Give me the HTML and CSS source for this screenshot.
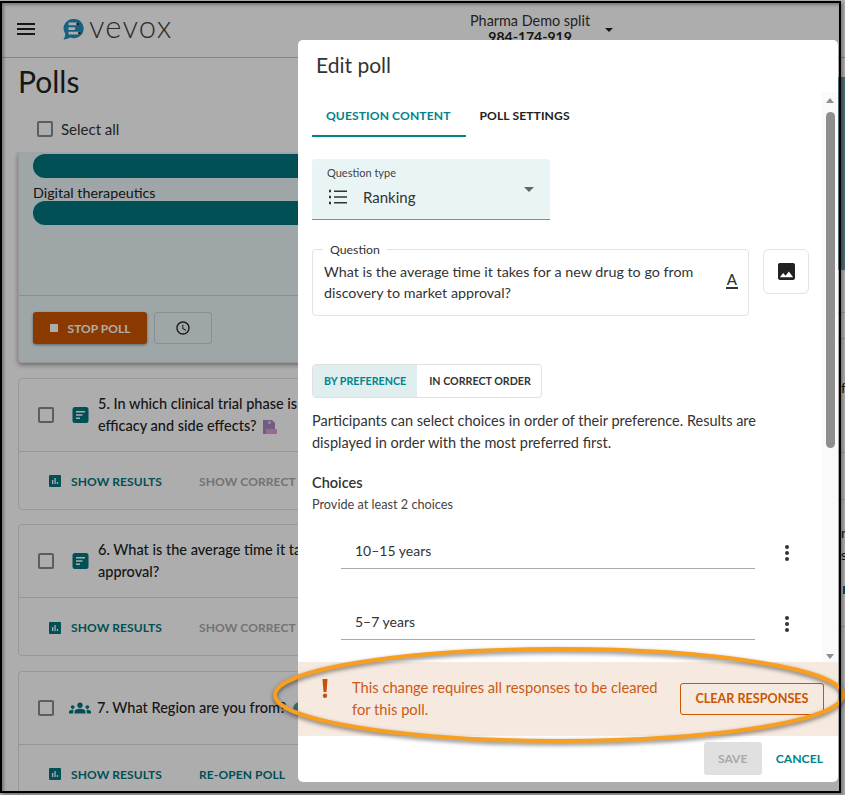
FILE: index.html
```html
<!DOCTYPE html>
<html lang="en">
<head>
<meta charset="utf-8">
<title>Polls</title>
<link rel="stylesheet" href="styles.css">
</head>
<body>
<div class="app">
  <header class="topbar">
    <svg class="burger" viewBox="0 0 18 12"><path d="M0 0h18v2H0zM0 5h18v2H0zM0 10h18v2H0z"/></svg>
    <svg class="logo-mark" viewBox="0 0 24 24"><path fill="#1e8fc0" d="M12 1a10.500 10.500 0 1 1-4 20.200Q4 23.500.5 23.500 2.500 21 2.400 17.200A10.500 10.500 0 0 1 12 1z"/><path fill="#fff" d="M6 5h9a1.500 1.500 0 0 1 0 3H6zM6 10h6a1.500 1.500 0 0 1 0 3H6zM6 15h12a1.500 1.500 0 0 1 0 3H6z"/><circle cx="16" cy="6.500" r="1.500" fill="#333"/><circle cx="18" cy="16.500" r="1.500" fill="#333"/></svg>
    <span class="logo-word">vevox</span>
    <div class="session">
      <span class="session-name">Pharma Demo split</span>
      <strong class="session-code">984-174-919</strong>
    </div>
    <span class="session-caret"></span>
  </header>
  <div class="shell">
    <main class="content">
      <h1 class="page-title">Polls</h1>
      <label class="select-all"><span class="checkbox"></span>Select all</label>
      <section class="card card-active">
        <div class="results">
          <div class="bar"></div>
          <div class="bar-label">Digital therapeutics</div>
          <div class="bar"></div>
        </div>
        <div class="foot-active">
          <button class="stop-btn"><span class="stop-square"></span>STOP POLL</button>
          <button class="timer-btn"><svg viewBox="0 0 24 24"><path d="M11.990 2C6.470 2 2 6.480 2 12s4.470 10 9.990 10C17.520 22 22 17.520 22 12S17.520 2 11.990 2zM12 20c-4.420 0-8-3.580-8-8s3.580-8 8-8 8 3.580 8 8-3.580 8-8 8zm.5-13H11v6l5.250 3.150.75-1.230-4.500-2.670z"/></svg></button>
        </div>
      </section>
      <section class="card">
        <div class="card-main">
          <span class="checkbox"></span>
          <svg class="type-icon" viewBox="0 0 16 16"><rect width="16" height="16" rx="2.500"/><path fill="#fff" d="M3.500 4h9v1.600h-9zM3.500 7.200h6.500v1.600H3.500zM3.500 10.400h4v1.600h-4z"/></svg>
          <p class="question">5. In which clinical trial phase is a new drug tested for<br>efficacy and side effects? <svg class="emoji" viewBox="0 0 14 14"><path fill="#a88ac0" d="M0 0h9l3 3v11H0z"/><path fill="#d9b8e0" d="M5 1h3v3H5z"/><path fill="#e59ad8" d="M3 9h11v5H3z"/></svg></p>
        </div>
        <div class="card-foot">
          <a class="action"><svg class="chart" viewBox="0 0 12 12"><rect width="12" height="12" rx="1"/><path fill="#fff" d="M3 5h1.300v4H3zM5.400 3h1.300v6H5.400zM7.800 7h1.300v2H7.800z"/></svg>SHOW RESULTS</a>
          <a class="action muted">SHOW CORRECT ANSWERS</a>
        </div>
      </section>
      <section class="card">
        <div class="card-main">
          <span class="checkbox"></span>
          <svg class="type-icon" viewBox="0 0 16 16"><rect width="16" height="16" rx="2.500"/><path fill="#fff" d="M3.500 4h9v1.600h-9zM3.500 7.200h6.500v1.600H3.500zM3.500 10.400h4v1.600h-4z"/></svg>
          <p class="question">6. What is the average time it takes for a new drug to go from discovery to market<br>approval?</p>
        </div>
        <div class="card-foot">
          <a class="action"><svg class="chart" viewBox="0 0 12 12"><rect width="12" height="12" rx="1"/><path fill="#fff" d="M3 5h1.300v4H3zM5.400 3h1.300v6H5.400zM7.800 7h1.300v2H7.800z"/></svg>SHOW RESULTS</a>
          <a class="action muted">SHOW CORRECT ANSWERS</a>
        </div>
      </section>
      <section class="card">
        <div class="card-main">
          <span class="checkbox"></span>
          <svg class="type-icon wide" viewBox="0 0 24 24"><path d="M12 12.750c1.630 0 3.070.39 4.240.9 1.080.48 1.760 1.560 1.760 2.730V18H6v-1.610c0-1.180.68-2.260 1.760-2.730 1.170-.52 2.610-.91 4.240-.91zM4 13c1.100 0 2-.9 2-2s-.9-2-2-2-2 .9-2 2 .9 2 2 2zm1.130 1.100C4.760 14.040 4.390 14 4 14c-.99 0-1.930.21-2.780.58C.48 14.900 0 15.620 0 16.430V18h4.500v-1.610c0-.83.23-1.610.63-2.290zM20 13c1.100 0 2-.9 2-2s-.9-2-2-2-2 .9-2 2 .9 2 2 2zm4 3.430c0-.81-.48-1.530-1.220-1.850C21.930 14.210 20.990 14 20 14c-.39 0-.76.04-1.130.1.400.68.630 1.460.630 2.290V18H24v-1.570zM12 6c1.660 0 3 1.340 3 3s-1.340 3-3 3-3-1.340-3-3 1.340-3 3-3z"/></svg>
          <p class="question">7. What Region are you from? <svg class="emoji globe" viewBox="0 0 14 14"><circle cx="7" cy="7" r="7" fill="#4a90c8"/><path fill="#5aa060" d="M3 2l4 1 1 3-3 3-3-2z"/></svg></p>
        </div>
        <div class="card-foot">
          <a class="action"><svg class="chart" viewBox="0 0 12 12"><rect width="12" height="12" rx="1"/><path fill="#fff" d="M3 5h1.300v4H3zM5.400 3h1.300v6H5.400zM7.800 7h1.300v2H7.800z"/></svg>SHOW RESULTS</a>
          <a class="action">RE-OPEN POLL</a>
        </div>
      </section>
    </main>
    <aside class="side">
      <div class="side-media"></div>
      <div class="side-row side-a"></div>
      <div class="side-row side-b"></div>
      <div class="side-row side-c">f</div>
      <div class="side-row side-d"></div>
      <div class="side-row side-e">n<br>s<span class="side-tag"></span></div>
    </aside>
  </div>
</div>
<div class="scrim"></div>
<div class="modal">
  <h2 class="modal-title">Edit poll</h2>
  <div class="modal-scroll">
    <div class="modal-body">
      <nav class="tabs">
        <span class="tab tab-on">QUESTION CONTENT</span>
        <span class="tab">POLL SETTINGS</span>
      </nav>
      <div class="select-field">
        <span class="field-label">Question type</span>
        <span class="select-value">
          <svg class="rank-icon" viewBox="0 0 18 16"><path d="M5 1.500h13v1.600H5zM5 7.200h13v1.600H5zM5 12.900h13v1.600H5z"/><path d="M0 .800h2v2.400H0zM0 6.800h2v2.400H0zM0 12.800h2v2.400H0z"/></svg>
          Ranking
        </span>
        <span class="select-caret"></span>
      </div>
      <div class="question-row">
        <fieldset class="question-field">
          <legend>Question</legend>
          <p class="question-text">What is the average time it takes for a new drug to go from discovery to market approval?</p>
          <span class="format-a">A</span>
        </fieldset>
        <button class="image-btn"><svg viewBox="0 0 18 18"><path d="M18 16V2c0-1.100-.9-2-2-2H2C.9 0 0 .9 0 2v14c0 1.100.9 2 2 2h14c1.100 0 2-.9 2-2zM5.500 10.500l2.500 3 3.500-4.500 4.500 6H2l3.500-4.500z"/></svg></button>
      </div>
      <div class="toggle">
        <span class="toggle-item toggle-on">BY PREFERENCE</span>
        <span class="toggle-item toggle-off">IN CORRECT ORDER</span>
      </div>
      <p class="help">Participants can select choices in order of their preference. Results are displayed in order with the most preferred first.</p>
      <h3 class="choices-title">Choices</h3>
      <p class="choices-sub">Provide at least 2 choices</p>
      <div class="choice"><span class="choice-input">10–15 years</span><span class="kebab"><i></i><i></i><i></i></span></div>
      <div class="choice"><span class="choice-input">5–7 years</span><span class="kebab"><i></i><i></i><i></i></span></div>
    </div>
    <div class="scrollbar">
      <span class="arrow-up"></span>
      <span class="thumb"></span>
      <span class="arrow-down"></span>
    </div>
  </div>
  <div class="warning">
    <svg class="warn-mark" viewBox="0 0 6 19"><path d="M.5 0h5L4.500 13h-3z"/><circle cx="3" cy="16.800" r="2.200"/></svg>
    <p class="warn-text">This change requires all responses to be cleared for this poll.</p>
    <button class="clear-btn">CLEAR RESPONSES</button>
  </div>
  <div class="modal-foot">
    <button class="save-btn">SAVE</button>
    <button class="cancel-btn">CANCEL</button>
  </div>
</div>
<svg class="annotation" viewBox="0 0 845 795"><ellipse cx="559" cy="695" rx="284" ry="46"/></svg>
<div class="frame"></div>
</body>
</html>
```
FILE: styles.css
```css
* { box-sizing: border-box; }
html, body { margin: 0; height: 100%; }
body {
  width: 845px;
  height: 795px;
  overflow: hidden;
  position: relative;
  background: #fff;
  color: #222;
  font-family: Lato, "Liberation Sans", sans-serif;
}
p, h1, h2, h3 { margin: 0; font-weight: 400; }
button { font-family: inherit; cursor: pointer; }

.app { height: 795px; overflow: hidden; }
.topbar {
  height: 58px;
  display: flex;
  align-items: center;
  padding: 0 0 0 17px;
  border-bottom: 1px solid #c4c4c4;
}
.burger { width: 18px; height: 12px; fill: #222; margin-right: 28px; }
.logo-mark { width: 22px; height: 22px; margin-right: 4px; }
.logo-word { font: 300 31px/1 Lato, sans-serif; color: #444; margin-top: -5px; width: 83px; letter-spacing: 1.200px; }
.session {
  display: flex; flex-direction: column; align-items: center;
  margin-left: 298px; font-size: 14.400px; line-height: 16px; margin-top: 1px;
}
.session-name { color: #333; }
.session-code { font-size: 14px; }
.session-caret {
  border: 4px solid transparent; border-top: 4px solid #222; border-bottom: 0;
  margin: 3px 0 0 15px;
}

.shell { display: flex; }
.content { width: 838px; flex: none; padding: 0 0 0 18px; overflow: hidden; height: 737px; }
.page-title { font-size: 30px; line-height: 36px; margin-top: 5px; color: #222; }
.select-all {
  display: flex; align-items: center; gap: 8px;
  margin: 22px 0 0 19px; height: 16px;
  font-size: 15px; color: #333;
}
.checkbox {
  width: 16px; height: 16px; flex: none;
  border: 2px solid #8a8a8a; border-radius: 2px; background: #fff;
}
.card {
  margin: 0 0 14.500px; width: 840px; height: 132px;
  border: 1px solid #e0e0e0; border-radius: 4px; background: #fff;
}
.card-active {
  height: 211px; margin-top: 15px; margin-bottom: 14.500px; background: #eaf5f6; border-top: 0; border-radius: 0 0 4px 4px;
  box-shadow: 0 2px 5px rgba(0,0,0,.4); display: flex; flex-direction: column;
  clip-path: inset(0 -10px -10px -10px);
}
.results { height: 143px; padding: 2px 14px 0; }
.bar { height: 24px; background: #00767f; border-radius: 12px; }
.bar-label { font-size: 14.300px; line-height: 17px; margin: 6px 0 0; color: #222; }
.foot-active { display: flex; height: 67px; border-top: 1px solid #ccd5d7; padding: 16px 14px 0; gap: 7px; }
.stop-btn {
  width: 114px; height: 32px; border: 0; border-radius: 3px; background: #cc5500; color: #fff;
  font-size: 12px; font-weight: 700; display: flex; align-items: center; justify-content: center; gap: 10px;
  box-shadow: 0 1px 3px rgba(0,0,0,.4); padding: 0;
}
.stop-square { width: 8px; height: 8px; background: #fff; }
.timer-btn {
  width: 58px; height: 32px; background: transparent; border: 1px solid #c9d3d5; border-radius: 3px;
  display: flex; align-items: center; justify-content: center; padding: 0;
}
.timer-btn svg { width: 16px; height: 16px; fill: #222; }

.card-main { display: flex; align-items: center; height: 72px; padding: 0 0 0 19px; }
.card-main .checkbox { margin-right: 18px; }
.type-icon { width: 17px; height: 16px; fill: #00767f; flex: none; margin-right: 9px; }
.type-icon.wide { width: 24px; height: 22px; margin: 0 5px 0 -4px; }
.question { font-size: 14.500px; line-height: 22px; font-weight: 500; color: #222; white-space: nowrap; }
.emoji { width: 14px; height: 14px; vertical-align: -3px; margin-left: 3px; }
.card-foot { display: flex; align-items: center; height: 60px; border-top: 1px solid #dcdcdc; padding-left: 30px; }
.action {
  display: flex; align-items: center; gap: 10px;
  font-size: 12px; font-weight: 700; color: #00767f; letter-spacing: .1px; margin-right: 37px;
}
.action.muted { color: #aaa; }
.chart { width: 12px; height: 12px; fill: #00767f; }

.side { flex: 1; padding-top: 19px; font-size: 14px; line-height: 22px; color: #222; }
.side-media { height: 193px; background: #74a0a5; }
.side-row { border-bottom: 1px solid #dcdcdc; padding-left: 3px; }
.side-a { height: 43px; }
.side-b { height: 26px; }
.side-c { height: 114px; padding-top: 38px; }
.side-d { height: 47px; }
.side-e { height: 127px; padding-top: 22px; }
.side-tag { display: block; width: 6px; height: 8px; margin: 20px 0 0 2px; background: #00767f; }

.scrim { position: absolute; inset: 0; background: rgba(0,0,0,.32); }

.modal {
  position: absolute; left: 298px; top: 40px; width: 540px; height: 742px;
  background: #fff; border-radius: 5px; display: flex; flex-direction: column;
  overflow: hidden;
}
.modal-title { font-size: 21px; line-height: 24px; color: #333; padding: 13px 18px 0; height: 52px; flex: none; }
.modal-scroll { flex: 1; min-height: 0; display: flex; overflow: hidden; }
.modal-body { flex: 1; padding: 0 0 0 14px; min-width: 0; }
.tabs { display: flex; height: 45px; }
.tab {
  padding: 0 14px; font-size: 12.100px; font-weight: 700; color: #222; line-height: 47px; letter-spacing: .1px;
}
.tab-on { color: #00838a; border-bottom: 2px solid #00838a; padding-right: 15px; }
.select-field {
  position: relative; width: 238px; height: 61px; margin-top: 22px;
  background: #e9f5f5; border-bottom: 1px solid #888; border-radius: 3px 3px 0 0; padding: 7px 15px;
}
.field-label { display: block; font-size: 11px; line-height: 13px; color: #444; }
.select-value { display: flex; align-items: center; gap: 16px; margin: 8px 0 0 2px; font-size: 15px; line-height: 20px; color: #333; }
.rank-icon { width: 18px; height: 16px; fill: #333; }
.select-caret {
  position: absolute; right: 16px; top: 28px;
  border: 5px solid transparent; border-top: 5px solid #666; border-bottom: 0;
}
.question-row { display: flex; gap: 14px; margin-top: 29px; }
.question-field {
  position: relative; width: 437px; height: 67px; margin: 0; padding: 11px 11px 0;
  border: 1px solid #e2e2e2; border-radius: 4px;
}
legend { font-size: 12.300px; line-height: 1px; height: 1px; padding: 0 7px; margin-left: -1px; color: #333; }
.question-text { width: 380px; font-size: 14.300px; line-height: 21px; color: #333; }
.format-a {
  position: absolute; right: 10px; top: 22px; font-size: 15px; font-weight: 500; line-height: 15px;
  border-bottom: 2px solid #333; color: #333; padding: 0 1px;
}
.image-btn {
  width: 46px; height: 45px; background: #fff; border: 1px solid #e2e2e2; border-radius: 6px;
  display: flex; align-items: center; justify-content: center; padding: 0;
}
.image-btn svg { width: 17px; height: 17px; fill: #222; }
.toggle { display: inline-flex; height: 34px; margin-top: 48px; border: 1px solid #e0e0e0; border-radius: 4px; overflow: hidden; vertical-align: top; }
.toggle-item { padding: 0 11px; font-size: 10.700px; font-weight: 700; line-height: 32px; color: #333; }
.toggle-on { background: #e0eef0; color: #00838a; }
.toggle-off { padding: 0 10px 0 12px; }
.help { width: 460px; font-size: 14.500px; line-height: 22px; color: #333; margin-top: 12px; }
.choices-title { font-size: 14.500px; font-weight: 600; line-height: 18px; color: #333; margin-top: 20px; }
.choices-sub { font-size: 12.700px; line-height: 16px; color: #444; margin-top: 4px; }
.choice { display: flex; align-items: center; height: 37px; margin: 0 0 34px 29px; }
.choices-sub + .choice { margin-top: 20px; }
.choice-input {
  width: 414px; height: 37px; border-bottom: 1px solid #aaa; padding: 9px 14px 0; font-size: 14px; line-height: 20px; color: #333;
}
.kebab { display: flex; flex-direction: column; gap: 2px; margin: 4px 0 0 30px; }
.kebab i { width: 4px; height: 4px; border-radius: 50%; background: #333; }
.scrollbar { width: 16px; flex: none; background: #fafafa; position: relative; }
.thumb { position: absolute; left: 4px; top: 20px; width: 9px; height: 336px; background: #8e8e8e; border-radius: 5px; }
.arrow-up, .arrow-down { position: absolute; left: 4px; border: 4.500px solid transparent; }
.arrow-up { top: 6px; border-top: 0; border-bottom: 5px solid #8e8e8e; }
.arrow-down { bottom: 3px; border-bottom: 0; border-top: 5px solid #8e8e8e; }

.warning {
  flex: none; height: 73px; background: #f6e9e0; display: flex; align-items: center; padding: 0 14px 0 24px;
}
.warn-mark { width: 6px; height: 19px; fill: #c8500a; flex: none; align-self: flex-start; margin: 17px 24px 0 0; }
.warn-text { width: 315px; margin-top: -2px; font-size: 14.700px; line-height: 22px; color: #cc5a14; }
.clear-btn {
  width: 144px; height: 32px; margin-left: auto; background: transparent; border: 1px solid #cc5500; border-radius: 3px;
  color: #cc5500; font-size: 12.600px; font-weight: 700; padding: 0;
}
.modal-foot { flex: none; height: 47px; display: flex; align-items: center; justify-content: flex-end; gap: 14px; padding: 0 15px 2px 0; border-top: 1px solid #eee; }
.save-btn { width: 58px; height: 33px; background: #e0e0e0; color: #a8a8a8; font-size: 12px; font-weight: 700; border: 0; border-radius: 3px; padding: 0; }
.cancel-btn { background: none; border: 0; padding: 0; color: #00838a; font-size: 12.200px; font-weight: 700; }

.annotation { position: absolute; inset: 0; width: 845px; height: 795px; pointer-events: none; overflow: visible; }
.annotation ellipse { fill: none; stroke: #f79f21; stroke-width: 4; filter: drop-shadow(0 2px 2px rgba(0,0,0,.5)); }
.frame { position: absolute; left: 0; top: 1px; width: 841px; height: 792px; border: 2px solid #000; pointer-events: none; box-shadow: inset 2px 2px 3px rgba(0,0,0,.3), 2px 2px 3px rgba(0,0,0,.3); }
```
